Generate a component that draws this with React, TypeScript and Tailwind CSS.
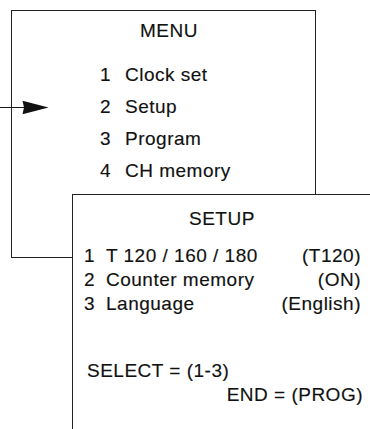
const menuItems = ['Clock set', 'Setup', 'Program', 'CH memory']

const setupItems = [
  { label: 'T 120 / 160 / 180', value: '(T120)' },
  { label: 'Counter memory', value: '(ON)' },
  { label: 'Language', value: '(English)' },
]

function Arrow() {
  return (
    <svg className="absolute left-0 top-[99px]" width="50" height="17" viewBox="0 0 50 17">
      <line x1="0" y1="8.5" x2="26" y2="8.5" stroke="#1a1a1a" strokeWidth="1" />
      <path d="M22.5 1.8 L48.5 8.5 L22.5 15.2 L24 8.5 Z" fill="#111" />
    </svg>
  )
}

export default function App() {
  return (
    <div className="relative h-[429px] w-[370px] overflow-hidden bg-white font-['Liberation_Sans',Arial,sans-serif] text-[19px] leading-[32px] tracking-[0.5px] text-[#111] [-webkit-text-stroke:0.15px_#111]">
      {/* menu window */}
      <div className="absolute left-[11px] top-[10px] h-[248px] w-[305px] border border-[#222]">
        <div className="pl-[128px] pt-[4px]">MENU</div>
        <ul className="mt-[12px] pl-[88px]">
          {menuItems.map((item, i) => (
            <li key={item} className="flex">
              <span className="w-[25px]">{i + 1}</span>
              <span>{item}</span>
            </li>
          ))}
        </ul>
      </div>

      <Arrow />

      {/* setup window */}
      <div className="absolute left-[72px] top-[194px] h-[260px] w-[320px] border border-[#222] bg-white leading-[24px]">
        <div className="pl-[116px] pt-[12px]">SETUP</div>
        <ul className="mt-[13px] w-[288px] pl-[11px]">
          {setupItems.map((row, i) => (
            <li key={row.label} className="flex">
              <span className="w-[22px]">{i + 1}</span>
              <span className="flex-1">{row.label}</span>
              <span>{row.value}</span>
            </li>
          ))}
        </ul>
        <div className="mt-[43px] pl-[14px]">SELECT = (1-3)</div>
        <div className="w-[290px] text-right">END = (PROG)</div>
      </div>
    </div>
  )
}
